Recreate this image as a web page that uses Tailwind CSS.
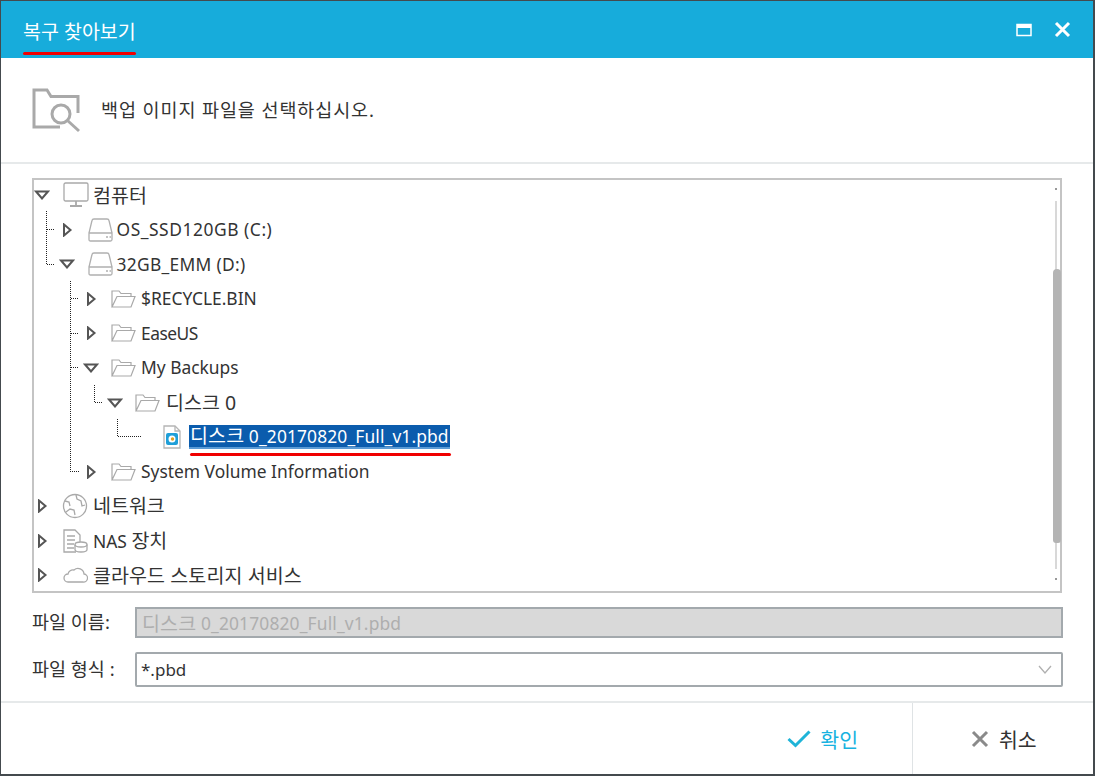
<!DOCTYPE html>
<html lang="ko"><head><meta charset="utf-8"><script src="https://cdn.jsdelivr.net/npm/@tailwindcss/browser@4"></script></head>
<body class="m-0 bg-white">
<div class="flex flex-col w-[1095px] h-[776px] bg-white overflow-hidden border-t border-l border-r-2 border-b-2 border-[#444a4e] font-['Noto_Sans','Noto_Sans_CJK_KR',sans-serif] text-[#333]">
  <header class="relative flex items-center justify-between h-[57px] shrink-0 bg-[#17acdb] pl-[22px] pr-[22px] text-white">
    <span class="text-[19.5px] leading-none mt-[4px]">복구 찾아보기</span>
    <span class="absolute left-[22px] top-[51px] w-[113px] h-[3px] rounded-full bg-[#f00000]"></span>
    <div class="flex items-center gap-[22px]">
      <svg class="w-[16px] h-[14px]" viewBox="0 0 16 14" fill="none" stroke="#fff"><rect x="1" y="1.500" width="14" height="11" stroke-width="1.500"/><path d="M1 3.500h14" stroke-width="3"/></svg>
      <svg class="w-[17px] h-[17px]" viewBox="0 0 17 17" fill="none" stroke="#fff" stroke-width="3"><path d="M2 2l13 13M15 2L2 15"/></svg>
    </div>
  </header>
  <section class="flex items-center h-[106px] shrink-0 border-b-2 border-[#e6e9ea] pl-[31px] gap-[19px]">
    <svg class="w-[50px] h-[46px]" viewBox="0 0 50 46" fill="none" stroke="#a9a9a9" stroke-width="3"><path d="M46 26V9.500H19L15 3H2v37h26"/><circle cx="29" cy="27" r="9"/><path d="M35.500 33.500L47 44" stroke-width="3"/></svg>
    <span class="text-[18.5px] tracking-[0.9px] leading-none">백업 이미지 파일을 선택하십시오.</span>
  </section>
  <div class="relative ml-[31px] mr-[31px] mt-[14px] h-[415px] shrink-0 border-2 border-[#c4c4c4]">
    <svg class="absolute left-[-2px] top-[-2px] w-[1030px] h-[415px]" viewBox="0 0 1030 415" fill="none" stroke="#222" stroke-width="1" stroke-dasharray="1 1" shape-rendering="crispEdges">
      <path d="M14.500 33V86.500H23M14.500 51.500H23"/>
      <path d="M38.500 103V293.500H47M38.500 120.500H47M38.500 155.500H47M38.500 189.500H47"/>
      <path d="M62.500 207V224.500H71"/>
      <path d="M85.500 241V258.500H110"/>
    </svg>
    <div class="absolute left-[1021px] top-[21px] w-[2px] h-[368px] bg-[#d8d8d8]"></div>
    <div class="absolute left-[1019px] top-[89px] w-[8px] h-[274px] rounded-t-[4px] rounded-b-[3px] bg-[#b4b4b4]"></div>
    <div class="absolute left-[1021px] top-[8px] w-[2px] h-[2px] bg-[#999]"></div>
    <div class="absolute left-[1021px] top-[398px] w-[2px] h-[2px] bg-[#999]"></div>
    <ul class="-mt-[2px] text-[17.4px] leading-none">
      <li class="flex items-center h-[34.55px]">
        <svg class="w-[16px] h-[10px]" viewBox="0 0 16 10" fill="#fff" stroke="#555" stroke-width="2"><path d="M2 1.500h12L8 8.500z"/></svg>
        <svg class="ml-[13px] w-[26px] h-[26px]" viewBox="0 0 26 26" fill="none" stroke="#a9a9a9" stroke-width="1.300"><rect x="1" y="1" width="24" height="18" rx="1.500"/><path d="M13 19v4M7 24h12" stroke-width="1.800"/></svg>
        <span class="ml-[4px] text-[19.5px]">컴퓨터</span>
      </li>
      <li class="flex items-center h-[34.55px] pl-[24.5px]">
        <svg class="w-[16px] h-[14px]" viewBox="0 0 16 14" fill="#fff" stroke="#555" stroke-width="2"><path d="M5 1.500v11L11.500 7z"/></svg>
        <svg class="ml-[13px] w-[25px] h-[24px]" viewBox="0 0 25 24" fill="none" stroke="#b0b0b0" stroke-width="1.300"><path d="M1 15L4 2.500Q4.300 1 6 1h13q1.700 0 2 1.500L24 15M1 15h23v6.500q0 1.500-1.500 1.500h-20Q1 23 1 21.500z"/><path d="M18 19h2M21.500 19h1.500"/></svg>
        <span class="ml-[4px] tracking-[0.55px]">OS_SSD120GB (C:)</span>
      </li>
      <li class="flex items-center h-[34.55px] pl-[24.5px]">
        <svg class="w-[16px] h-[10px]" viewBox="0 0 16 10" fill="#fff" stroke="#555" stroke-width="2"><path d="M2 1.500h12L8 8.500z"/></svg>
        <svg class="ml-[13px] w-[25px] h-[24px]" viewBox="0 0 25 24" fill="none" stroke="#b0b0b0" stroke-width="1.300"><path d="M1 15L4 2.500Q4.300 1 6 1h13q1.700 0 2 1.500L24 15M1 15h23v6.500q0 1.500-1.500 1.500h-20Q1 23 1 21.500z"/><path d="M18 19h2M21.500 19h1.500"/></svg>
        <span class="ml-[4px] tracking-[0.3px]">32GB_EMM (D:)</span>
      </li>
      <li class="flex items-center h-[34.55px] pl-[49px]">
        <svg class="w-[16px] h-[14px]" viewBox="0 0 16 14" fill="#fff" stroke="#555" stroke-width="2"><path d="M5 1.500v11L11.500 7z"/></svg>
        <svg class="ml-[12px] w-[25px] h-[20px]" viewBox="0 0 25 20" fill="none" stroke="#a9a9a9" stroke-width="1.200"><path d="M1 18V2h7l2 2.500h10v3M1 18h19l4-10.500H6L1 18z"/></svg>
        <span class="ml-[5px]">$RECYCLE.BIN</span>
      </li>
      <li class="flex items-center h-[34.55px] pl-[49px]">
        <svg class="w-[16px] h-[14px]" viewBox="0 0 16 14" fill="#fff" stroke="#555" stroke-width="2"><path d="M5 1.500v11L11.500 7z"/></svg>
        <svg class="ml-[12px] w-[25px] h-[20px]" viewBox="0 0 25 20" fill="none" stroke="#a9a9a9" stroke-width="1.200"><path d="M1 18V2h7l2 2.500h10v3M1 18h19l4-10.500H6L1 18z"/></svg>
        <span class="ml-[5px] -tracking-[0.5px]">EaseUS</span>
      </li>
      <li class="flex items-center h-[34.55px] pl-[49px]">
        <svg class="w-[16px] h-[10px]" viewBox="0 0 16 10" fill="#fff" stroke="#555" stroke-width="2"><path d="M2 1.500h12L8 8.500z"/></svg>
        <svg class="ml-[12px] w-[25px] h-[20px]" viewBox="0 0 25 20" fill="none" stroke="#a9a9a9" stroke-width="1.200"><path d="M1 18V2h7l2 2.500h10v3M1 18h19l4-10.500H6L1 18z"/></svg>
        <span class="ml-[5px]">My Backups</span>
      </li>
      <li class="flex items-center h-[34.55px] pl-[73px]">
        <svg class="w-[16px] h-[10px]" viewBox="0 0 16 10" fill="#fff" stroke="#555" stroke-width="2"><path d="M2 1.500h12L8 8.500z"/></svg>
        <svg class="ml-[12px] w-[25px] h-[20px]" viewBox="0 0 25 20" fill="none" stroke="#a9a9a9" stroke-width="1.200"><path d="M1 18V2h7l2 2.500h10v3M1 18h19l4-10.500H6L1 18z"/></svg>
        <span class="ml-[6px] text-[19.5px]">디스크 0</span>
      </li>
      <li class="relative flex items-center h-[34.55px] pl-[128px]">
        <svg class="w-[20px] h-[24px]" viewBox="0 0 20 24" fill="none"><path d="M2 1h11l5 5v17H2z" fill="#fff" stroke="#b5b5b5" stroke-width="1.300"/><path d="M13 1v5h5" stroke="#b5b5b5" stroke-width="1.300"/><rect x="4" y="8" width="12" height="12" rx="2" fill="#1f9fd8"/><circle cx="10" cy="14" r="3.500" fill="#fff"/><circle cx="10.500" cy="14" r="1.700" fill="#e0a020"/></svg>
        <span class="ml-[7px] bg-[#0b5cad] text-white leading-[22px] h-[22px] px-[1px] border-b-2 border-[#5b9bd5] box-content whitespace-nowrap tracking-[0.13px]"><span class="text-[19.5px]">디스크</span> 0_20170820_Full_v1.pbd</span>
        <span class="absolute left-[156px] top-[33px] w-[261px] h-[3px] rounded-full bg-[#f00000]"></span>
      </li>
      <li class="flex items-center h-[34.55px] pl-[49px]">
        <svg class="w-[16px] h-[14px]" viewBox="0 0 16 14" fill="#fff" stroke="#555" stroke-width="2"><path d="M5 1.500v11L11.500 7z"/></svg>
        <svg class="ml-[12px] w-[25px] h-[20px]" viewBox="0 0 25 20" fill="none" stroke="#a9a9a9" stroke-width="1.200"><path d="M1 18V2h7l2 2.500h10v3M1 18h19l4-10.500H6L1 18z"/></svg>
        <span class="ml-[5px]">System Volume Information</span>
      </li>
      <li class="flex items-center h-[34.55px]">
        <svg class="w-[16px] h-[14px]" viewBox="0 0 16 14" fill="#fff" stroke="#555" stroke-width="2"><path d="M5 1.500v11L11.500 7z"/></svg>
        <svg class="ml-[12px] w-[26px] h-[26px]" viewBox="0 0 26 26" fill="none" stroke="#a9a9a9" stroke-width="1.300"><circle cx="13" cy="13" r="11.500"/><path d="M4 19l4-3 4 1 1 5M14 2l1 4 4 2 1 5 3-1M3 8l4 1 1 4"/></svg>
        <span class="ml-[5px] text-[19.5px]">네트워크</span>
      </li>
      <li class="flex items-center h-[34.55px]">
        <svg class="w-[16px] h-[14px]" viewBox="0 0 16 14" fill="#fff" stroke="#555" stroke-width="2"><path d="M5 1.500v11L11.500 7z"/></svg>
        <svg class="ml-[12px] w-[26px] h-[26px]" viewBox="0 0 26 26" fill="none" stroke="#a9a9a9" stroke-width="1.300"><path d="M14 24H2V2h11l5 5v7"/><path d="M5 8h8M5 12h8M5 16h7M5 20h7"/><ellipse cx="19" cy="16.500" rx="6" ry="2.500"/><path d="M13 16.500v5c0 1.500 3 2.500 6 2.500s6-1 6-2.500v-5"/></svg>
        <span class="ml-[5px]">NAS <span class="text-[19.5px]">장치</span></span>
      </li>
      <li class="flex items-center h-[34.55px]">
        <svg class="w-[16px] h-[14px]" viewBox="0 0 16 14" fill="#fff" stroke="#555" stroke-width="2"><path d="M5 1.500v11L11.500 7z"/></svg>
        <svg class="ml-[12px] w-[26px] h-[18px]" viewBox="0 0 26 18" fill="none" stroke="#a9a9a9" stroke-width="1.300"><path d="M6 16h15a4 4 0 0 0 1-8 6 6 0 0 0-10-4 5 5 0 0 0-6 4 4 4 0 0 0 0 8z"/></svg>
        <span class="ml-[5px] text-[19.5px] tracking-[0.1px]">클라우드 스토리지 서비스</span>
      </li>
    </ul>
  </div>
  <div class="flex items-center mt-[14px] ml-[31px] mr-[30px] h-[31px] shrink-0">
    <span class="w-[103px] text-[18.5px] leading-none">파일 이름:</span>
    <div class="flex-1 h-[31px] px-[5px] pt-[2px] flex items-center whitespace-pre bg-[#d9d9d9] border-2 border-[#a3a9ad] text-[17.4px] tracking-[0.15px] text-[#aeaeae]"><span class="text-[19.5px]">디스크</span> 0_20170820_Full_v1.pbd</div>
  </div>
  <div class="flex items-center mt-[14px] ml-[31px] mr-[30px] h-[35px] shrink-0">
    <span class="w-[103px] text-[18.5px] leading-none">파일 형식 :</span>
    <div class="flex-1 h-[35px] pl-[4px] pr-[9px] flex items-center justify-between bg-white border-2 border-[#a3a9ad] rounded-[2px] text-[17px]">*.pbd
      <svg class="w-[14px] h-[9px]" viewBox="0 0 14 9" fill="none" stroke="#b0b0b0" stroke-width="1.300"><path d="M1 1l6 7 6-7"/></svg>
    </div>
  </div>
  <footer class="flex mt-[14px] flex-1 border-t-2 border-[#e6e9ea]">
    <div class="flex-1 flex items-center justify-end pt-[3px] pr-[54px] gap-[9px] text-[#17b2e0] text-[20.5px]">
      <svg class="w-[24px] h-[18px] -mt-[3px]" viewBox="0 0 24 18" fill="none" stroke="#1fb4d8" stroke-width="3"><path d="M1.500 9l7 6.500L22.500 1.500"/></svg>
      <span>확인</span>
    </div>
    <div class="w-[181px] flex items-center pt-[3px] pl-[58px] gap-[10px] border-l border-[#dfe3e5] text-[20.5px]">
      <svg class="w-[18px] h-[18px] -mt-[3px]" viewBox="0 0 18 18" fill="none" stroke="#8a8a8a" stroke-width="3"><path d="M2 2l14 14M16 2L2 16"/></svg>
      <span>취소</span>
    </div>
  </footer>
</div>
</body></html>
